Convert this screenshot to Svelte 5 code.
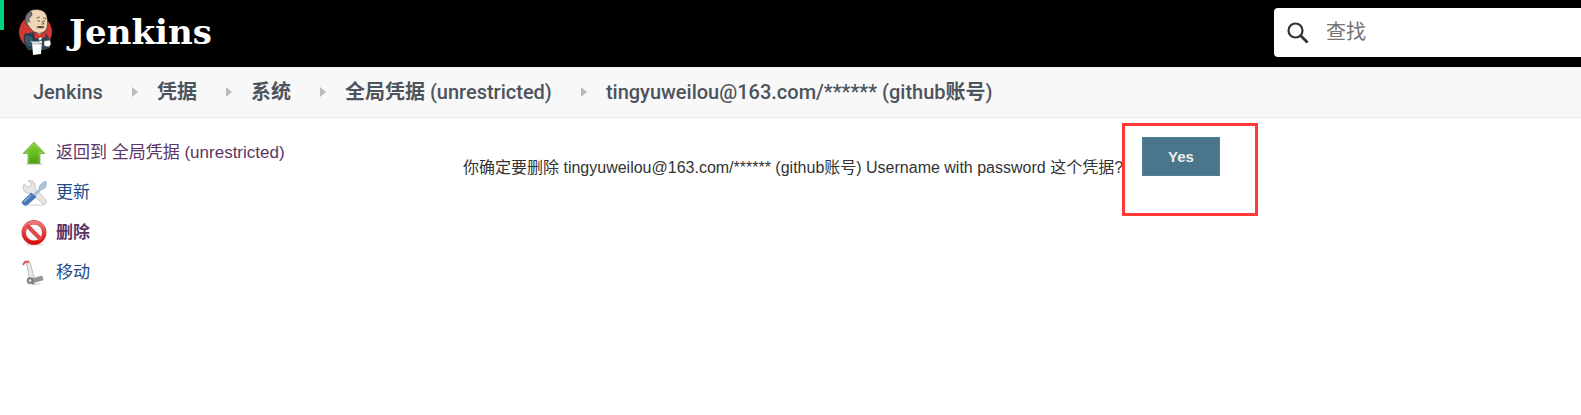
<script>
  const crumbs = ['Jenkins', '凭据', '系统', '全局凭据 (unrestricted)', 'tingyuweilou@163.com/****** (github账号)'];
  const tasks = [
    { icon: 'up', label: '返回到 全局凭据 (unrestricted)', visited: true },
    { icon: 'tools', label: '更新' },
    { icon: 'delete', label: '删除', visited: true, current: true },
    { icon: 'move', label: '移动' }
  ];
  // Chinese runs are set one weight heavier than the Latin text beside them.
  const runs = (text) => text.split(/([\u4e00-\u9fff]+)/).filter(Boolean);
  const isHan = (text) => /^[\u4e00-\u9fff]/.test(text);
</script>

<header>
  <span class="marker"></span>
  <a class="brand" href="#home">
    <svg class="butler" viewBox="0 0 44 56" aria-hidden="true">
      <ellipse cx="21.500" cy="28" rx="16.500" ry="16.500" fill="#d33833" />
      <path d="M11 30 L19 28 L32 29 L35 34 L36 44 L30 46 L14 46 Q9 41 11 30Z" fill="#2c4555" />
      <path d="M11 30 Q8 38 15 44 L20 41 L19 32Z" fill="#37586a" stroke="#17232b" stroke-width=".8" />
      <path d="M19 27 L26 37 L32 29Z" fill="#e8edf0" />
      <path d="M12 14 Q13 5 23 5.500 Q33 5.500 33.500 16 Q34.500 25 30 28 Q26 31 20 28 L14 22Z" fill="#f0d6b7" stroke="#332c28" stroke-width=".7" />
      <path d="M16 8 Q11 10 11 16 Q11 20 14 22 L16 18 L14.500 15 L18 11 L17.500 8Z" fill="#77777a" stroke="#242424" stroke-width=".6" />
      <path d="M16 18 Q13 17 14 21 Q15 23 17 22" fill="#f0d6b7" stroke="#8d7865" stroke-width=".5" />
      <path d="M22.500 14 L26 13 M29 13.500 L32 15 M23.500 17 H26 M29 17 H31 M28 17 L30 20 H27.500" fill="none" stroke="#4a3e36" stroke-width=".8" />
      <path d="M22 23 Q26 21 31 23 Q27 25.500 22 23Z" fill="#50413b" />
      <path d="M20 28 L25.500 31 L31 28 L32 34 L26.500 33 L21 35Z" fill="#e2332e" stroke="#751f20" stroke-width=".6" />
      <path d="M18 38 L28 37 L27 50 L19 51Z" fill="#fff" />
      <path d="M16 37 L25 38 L28 40 L19 40Z" fill="#eee" stroke="#60707a" stroke-width=".5" />
      <path d="M30 37 L36 36 L37 40 L35 43 L30 42Z" fill="#fff" stroke="#4a4a4a" stroke-width=".6" />
    </svg>
    <span>Jenkins</span>
  </a>
  <label class="search">
    <svg viewBox="0 0 24 24" aria-hidden="true">
      <circle cx="9.500" cy="9.500" r="7" fill="none" stroke="#333" stroke-width="2.200" />
      <path d="M14.500 14.500 L21.500 21.500" stroke="#333" stroke-width="2.800" />
    </svg>
    <input type="search" placeholder="查找" aria-label="查找" />
  </label>
</header>

<nav class="crumbs">
  {#each crumbs as crumb, i}
    {#if i > 0}<span class="arrow"></span>{/if}
    <a href="#crumb">{#each runs(crumb) as run}<span class:han={isHan(run)}>{run}</span>{/each}</a>
  {/each}
</nav>

<div class="page">
  <aside>
    {#each tasks as task}
      <a href="#task" class:visited={task.visited} class:current={task.current}>
        <svg viewBox="0 0 26 26" aria-hidden="true">
          {#if task.icon === 'up'}
            <defs>
              <linearGradient id="leaf" x1="0" y1="0" x2="0" y2="1">
                <stop offset="0" stop-color="#8fd045" /><stop offset=".55" stop-color="#63bd18" /><stop offset="1" stop-color="#4d9d10" />
              </linearGradient>
            </defs>
            <ellipse cx="13" cy="24" rx="9" ry="1.500" fill="#ddd" />
            <path d="M13 2 L24 13.500 H19 V23.500 H7 V13.500 H2Z" fill="url(#leaf)" stroke="#6fa845" stroke-width=".7" stroke-linejoin="round" />
            <path d="M13 3.500 L21.500 12.500 H18 V22.500 M13 3.500 L4.500 12.500 H8 V22.500" fill="none" stroke="#a6dc6d" stroke-width=".6" />
          {:else if task.icon === 'tools'}
            <ellipse cx="14" cy="25" rx="11" ry="1" fill="#e6e6e6" />
            <path d="M3 4 L7 7 L10 6 L10 3 L7 1 Q12 -1 14 4 L14 8 L25 20 Q26 24 22 24 L10 13 Q4 14 2 9Z" fill="#e6e6e4" stroke="#b5b5b3" stroke-width=".7" stroke-linejoin="round" />
            <path d="M12 15 L18 9 L19 5 L24 1 L26 3 L24 8 L20 10 L14 16Z" fill="#afc3dc" stroke="#8fa6c2" stroke-width=".7" />
            <path d="M10 13 L15 17 L6 25 Q2 26 1 22Z" fill="#4678b8" stroke="#4673ad" stroke-width=".8" stroke-linejoin="round" />
            <path d="M10 15 L3 22" stroke="#91b2dc" stroke-width="1.200" />
          {:else if task.icon === 'delete'}
            <defs>
              <linearGradient id="stop" x1="0" y1="0" x2="0" y2="1">
                <stop offset="0" stop-color="#ee7b7b" /><stop offset=".5" stop-color="#de4040" /><stop offset="1" stop-color="#d90d0d" />
              </linearGradient>
            </defs>
            <ellipse cx="13" cy="24.500" rx="9" ry="1.300" fill="#ddd" />
            <circle cx="13" cy="12.500" r="10.300" fill="#f8f8f8" stroke="#cf4a4a" stroke-width="4.400" />
            <circle cx="13" cy="12.500" r="10.300" fill="none" stroke="url(#stop)" stroke-width="3.400" />
            <path d="M6 5.500 L20 19.500" stroke="#e04848" stroke-width="4" />
          {:else}
            <ellipse cx="13" cy="24" rx="7" ry="1.300" fill="#e5e5e5" />
            <path d="M10 19 L21 16 L22 20 L11 23Z" fill="#969692" stroke="#777" stroke-width=".5" />
            <path d="M5.500 3 L8.500 19 L13 17 L9 2Z" fill="#e9e9e7" stroke="#b0b0ac" stroke-width=".8" />
            <path d="M2 5 L4 2 L8 1.500" fill="none" stroke="#e05454" stroke-width="2" />
            <circle cx="9" cy="20.500" r="3.200" fill="#777" />
            <circle cx="9" cy="20.500" r="1.500" fill="#ddd" />
            <circle cx="12" cy="23" r="1.600" fill="#888" />
          {/if}
        </svg>
        <span>{task.label}</span>
      </a>
    {/each}
  </aside>

  <main>
    <form onsubmit={(event) => event.preventDefault()}>
      <p>你确定要删除 tingyuweilou@163.com/****** (github账号) Username with password 这个凭据?</p>
      <div class="confirm">
        <button type="submit">Yes</button>
        <span class="highlight"></span>
      </div>
    </form>
  </main>
</div>

<style>
  :global(body) {
    margin: 0;
    background: #fff;
    color: #333;
    font-family: "Liberation Sans", "Noto Sans CJK SC", sans-serif;
    overflow-x: hidden;
  }
  a { text-decoration: none; }
  header {
    position: relative;
    display: flex;
    align-items: center;
    justify-content: space-between;
    height: 67px;
    background: #000;
  }
  .marker {
    position: absolute;
    left: 0;
    top: 0;
    width: 4px;
    height: 30px;
    background: #00d47e;
  }
  .brand {
    display: flex;
    align-items: center;
    gap: 11px;
    margin-bottom: 4px;
    padding-left: 14px;
    color: #fff;
    font: bold 34px/56px "DejaVu Serif", serif;
  }
  .butler { width: 44px; height: 56px; }
  .search {
    display: flex;
    align-items: center;
    gap: 16px;
    box-sizing: border-box;
    width: 307px;
    height: 49px;
    margin-bottom: 2px;
    padding-left: 12px;
    background: #fff;
    border-radius: 4px 0 0 4px;
  }
  .search svg { width: 24px; height: 24px; flex: none; }
  .search input {
    flex: 1;
    min-width: 0;
    padding: 0 0 2px;
    border: 0;
    outline: 0;
    background: none;
    font: 20px/28px "Liberation Sans", "Noto Sans CJK SC", sans-serif;
  }
  .search input::placeholder { color: #757575; }
  .crumbs {
    display: flex;
    align-items: center;
    height: 50px;
    padding-left: 33px;
    background: #f8f8f8;
    border-bottom: 1px solid #eaeaea;
    font: 500 20px/28px Roboto, "Noto Sans CJK SC", sans-serif;
    white-space: nowrap;
  }
  .crumbs a { color: #4d545d; }
  .han { font-weight: 700; }
  .arrow {
    margin: 0 19px 0 29px;
    border: 5px solid transparent;
    border-left: 6px solid #bbb;
    border-right: 0;
  }
  .page { display: flex; }
  aside {
    display: flex;
    flex-direction: column;
    flex: none;
    width: 322px;
    padding: 15px 0 0 21px;
    font-size: 17px;
    line-height: 40px;
  }
  aside a {
    display: flex;
    align-items: center;
    gap: 9px;
    height: 40px;
    color: #204a87;
  }
  aside svg { width: 26px; height: 26px; flex: none; }
  aside .visited { color: #5c3566; }
  .current { font-weight: bold; }
  main {
    flex: 1;
    padding: 19px 0 0 120px;
  }
  form {
    display: flex;
    align-items: flex-start;
    gap: 19px;
  }
  p {
    margin: 19px 0 0;
    font-size: 16px;
    line-height: 24px;
    white-space: nowrap;
  }
  .confirm { position: relative; }
  button {
    box-sizing: border-box;
    height: 39px;
    padding: 0 25px;
    border: 1px solid #4d8198;
    background: #4b758b;
    color: #eee;
    font: bold 15px/20px "Liberation Sans", sans-serif;
  }
  .highlight {
    position: absolute;
    inset: -14px -38px -40px -20px;
    border: 3px solid #ff3838;
    pointer-events: none;
  }
</style>
